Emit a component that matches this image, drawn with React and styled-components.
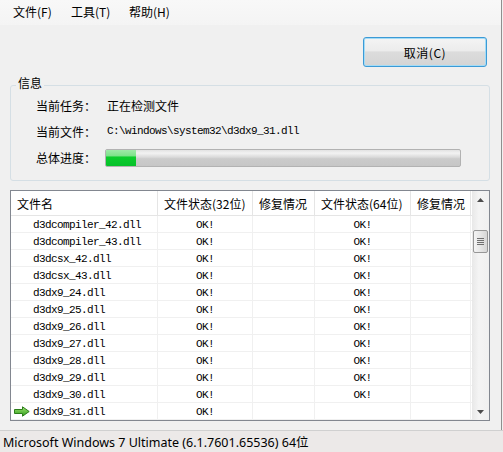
import React from "react";
import styled, { createGlobalStyle } from "styled-components";

const GlobalStyle = createGlobalStyle`
  html, body {
    margin: 0;
    padding: 0;
    background: #f0f0f0;
  }
  * {
    box-sizing: border-box;
  }
`;

const cjk = `"Noto Sans CJK SC", "Noto Sans", sans-serif`;
const mono = `"Liberation Mono", "Noto Sans CJK SC", monospace`;

const rows = [
  { name: "d3dcompiler_42.dll", s32: "OK!", s64: "OK!" },
  { name: "d3dcompiler_43.dll", s32: "OK!", s64: "OK!" },
  { name: "d3dcsx_42.dll", s32: "OK!", s64: "OK!" },
  { name: "d3dcsx_43.dll", s32: "OK!", s64: "OK!" },
  { name: "d3dx9_24.dll", s32: "OK!", s64: "OK!" },
  { name: "d3dx9_25.dll", s32: "OK!", s64: "OK!" },
  { name: "d3dx9_26.dll", s32: "OK!", s64: "OK!" },
  { name: "d3dx9_27.dll", s32: "OK!", s64: "OK!" },
  { name: "d3dx9_28.dll", s32: "OK!", s64: "OK!" },
  { name: "d3dx9_29.dll", s32: "OK!", s64: "OK!" },
  { name: "d3dx9_30.dll", s32: "OK!", s64: "OK!" },
  { name: "d3dx9_31.dll", s32: "OK!", s64: "", current: true },
];

const Arrow = () => (
  <svg width="16" height="11" viewBox="0 0 16 11">
    <defs>
      <linearGradient id="ag" x1="0" y1="0" x2="0" y2="1">
        <stop offset="0" stopColor="#9fe36f" />
        <stop offset="1" stopColor="#2f9e1c" />
      </linearGradient>
    </defs>
    <path
      d="M0.5 3.5 H8.5 V0.8 L15.2 5.5 L8.5 10.2 V7.5 H0.5 Z"
      fill="url(#ag)"
      stroke="#2c7d1a"
      strokeWidth="1"
      strokeLinejoin="round"
    />
  </svg>
);

const App = () => {
  return (
    <Window>
      <GlobalStyle />
      <MenuBar>
        <MenuItem>文件(F)</MenuItem>
        <MenuItem>工具(T)</MenuItem>
        <MenuItem>帮助(H)</MenuItem>
      </MenuBar>
      <Body>
        <ButtonRow>
          <Button>取消(C)</Button>
        </ButtonRow>
        <Group>
          <GroupTitle>信息</GroupTitle>
          <InfoRow>
            <Label>当前任务：</Label>
            <Value>正在检测文件</Value>
          </InfoRow>
          <InfoRow>
            <Label>当前文件：</Label>
            <PathValue>C:\windows\system32\d3dx9_31.dll</PathValue>
          </InfoRow>
          <InfoRow>
            <Label>总体进度：</Label>
            <Progress>
              <ProgressFill style={{ width: "30px" }} />
            </Progress>
          </InfoRow>
        </Group>
        <List>
          <Table>
            <HeaderRow>
              <HeadCell>文件名</HeadCell>
              <HeadCell>文件状态(32位)</HeadCell>
              <HeadCell>修复情况</HeadCell>
              <HeadCell>文件状态(64位)</HeadCell>
              <HeadCell>修复情况</HeadCell>
            </HeaderRow>
            {rows.map((r) => (
              <Row key={r.name}>
                <NameCell>
                  <Mark>{r.current && <Arrow />}</Mark>
                  {r.name}
                </NameCell>
                <Cell $center>{r.s32}</Cell>
                <Cell />
                <Cell $center>{r.s64}</Cell>
                <Cell />
              </Row>
            ))}
          </Table>
          <ScrollBar>
            <ArrowBtn>
              <svg width="7" height="4" viewBox="0 0 7 4">
                <path d="M0 4 L3.5 0 L7 4 Z" fill="#4d4d4d" />
              </svg>
            </ArrowBtn>
            <Track>
              <Thumb>
                <Grip />
                <Grip />
                <Grip />
                <Grip />
              </Thumb>
            </Track>
            <ArrowBtn>
              <svg width="7" height="4" viewBox="0 0 7 4">
                <path d="M0 0 L7 0 L3.5 4 Z" fill="#4d4d4d" />
              </svg>
            </ArrowBtn>
          </ScrollBar>
        </List>
      </Body>
      <StatusBar>Microsoft Windows 7 Ultimate (6.1.7601.65536) 64位</StatusBar>
    </Window>
  );
};

export default App;

const Window = styled.div`
  width: 503px;
  height: 452px;
  display: flex;
  flex-direction: column;
  background: #f0f0f0;
  overflow: hidden;
  font-family: ${cjk};
  color: #000;
`;

const MenuBar = styled.div`
  height: 25px;
  display: flex;
  align-items: center;
  padding-left: 6px;
  background: linear-gradient(#f8f8f8, #f4f4f4);
  border-right: 1px solid #8f8f8f;
  width: 502px;
`;

const MenuItem = styled.div`
  font-size: 12px;
  padding: 0 0 2px 7px;
  width: 58px;
  line-height: 18px;
`;

const Body = styled.div`
  flex: 1;
  width: 502px;
  border-right: 1px solid #8f8f8f;
  display: flex;
  flex-direction: column;
  padding: 0 12px 0 10px;
`;

const ButtonRow = styled.div`
  display: flex;
  justify-content: flex-end;
  padding-top: 12px;
  padding-right: 2px;
`;

const Button = styled.div`
  width: 124px;
  height: 30px;
  border: 1px solid #3c9ad6;
  border-radius: 3px;
  background: linear-gradient(#f4f4f4 0%, #ececec 45%, #dcdcdc 50%, #d4d4d4 100%);
  box-shadow: inset 0 0 0 1px #a4dcf6;
  display: flex;
  align-items: center;
  justify-content: center;
  font-size: 12px;
  letter-spacing: 0.5px;
`;

const Group = styled.div`
  position: relative;
  margin-top: 18px;
  height: 96px;
  width: 480px;
  border: 1px solid #d5dfe5;
  border-radius: 3px;
  padding: 6px 0 0 25px;
  display: flex;
  flex-direction: column;
`;

const GroupTitle = styled.div`
  position: absolute;
  top: -11px;
  left: 5px;
  padding: 0 2px;
  background: #f0f0f0;
  font-size: 12px;
  line-height: 16px;
`;

const InfoRow = styled.div`
  height: 26px;
  display: flex;
  align-items: center;
`;

const Label = styled.div`
  width: 69px;
  font-size: 12px;
`;

const Value = styled.div`
  font-size: 12px;
  padding-left: 2px;
`;

const PathValue = styled.div`
  font-family: ${mono};
  font-size: 11px;
  letter-spacing: -0.6px;
  padding-left: 2px;
`;

const Progress = styled.div`
  width: 356px;
  height: 18px;
  margin-top: 2px;
  border: 1px solid #b2b2b2;
  border-radius: 2px;
  background: linear-gradient(#e2e2e2 0%, #f2f2f2 20%, #dadada 45%, #cbcbcb 55%, #c6c6c6 100%);
  overflow: hidden;
`;

const ProgressFill = styled.div`
  height: 100%;
  background: linear-gradient(#9eeaa8 0%, #7ee38b 35%, #0bcc2c 45%, #06c12a 100%);
`;

const List = styled.div`
  margin-top: 9px;
  width: 480px;
  height: 231px;
  border: 1px solid #828790;
  background: #fff;
  display: flex;
`;

const Table = styled.div`
  flex: 1;
  display: flex;
  flex-direction: column;
  overflow: hidden;
`;

const columns = "147px 95px 62px 96px 60px";

const HeaderRow = styled.div`
  display: grid;
  grid-template-columns: ${columns};
  height: 25px;
  border-bottom: 1px solid #e5e5e5;
  background: #fff;
`;

const HeadCell = styled.div`
  font-size: 12px;
  display: flex;
  align-items: center;
  padding-left: 6px;
  border-right: 1px solid #e5e5e5;
  white-space: nowrap;
  overflow: hidden;
`;

const Row = styled.div`
  display: grid;
  grid-template-columns: ${columns};
  height: 17px;
  border-bottom: 1px solid #f0f0f0;
`;

const Cell = styled.div`
  font-family: ${mono};
  font-size: 11px;
  letter-spacing: -0.6px;
  display: flex;
  align-items: center;
  padding-top: 2px;
  justify-content: ${(p) => (p.$center ? "center" : "flex-start")};
  border-right: 1px solid #f0f0f0;
`;

const NameCell = styled(Cell)`
  padding-left: 3px;
`;

const Mark = styled.span`
  width: 19px;
  display: flex;
  align-items: center;
  margin-top: -1px;
`;

const ScrollBar = styled.div`
  width: 17px;
  display: flex;
  flex-direction: column;
  background: linear-gradient(90deg, #e8e8e8, #f4f4f4 40%, #f0f0f0);
`;

const ArrowBtn = styled.div`
  height: 17px;
  display: flex;
  align-items: center;
  justify-content: center;
`;

const Track = styled.div`
  flex: 1;
  padding-top: 22px;
  display: flex;
  justify-content: center;
`;

const Thumb = styled.div`
  width: 15px;
  height: 23px;
  border: 1px solid #979797;
  border-radius: 2px;
  background: linear-gradient(90deg, #f4f4f4, #e6e6e6 50%, #d6d6d6);
  display: flex;
  flex-direction: column;
  align-items: center;
  justify-content: center;
  gap: 1px;
`;

const Grip = styled.div`
  width: 7px;
  height: 1px;
  background: #6f6f6f;
`;

const StatusBar = styled.div`
  height: 22px;
  margin-top: auto;
  border-top: 1px solid #d0d0d0;
  background: #ece9e8;
  padding-left: 3px;
  display: flex;
  align-items: center;
  font-family: "Noto Sans", "Noto Sans CJK SC", sans-serif;
  font-size: 12.5px;
`;
